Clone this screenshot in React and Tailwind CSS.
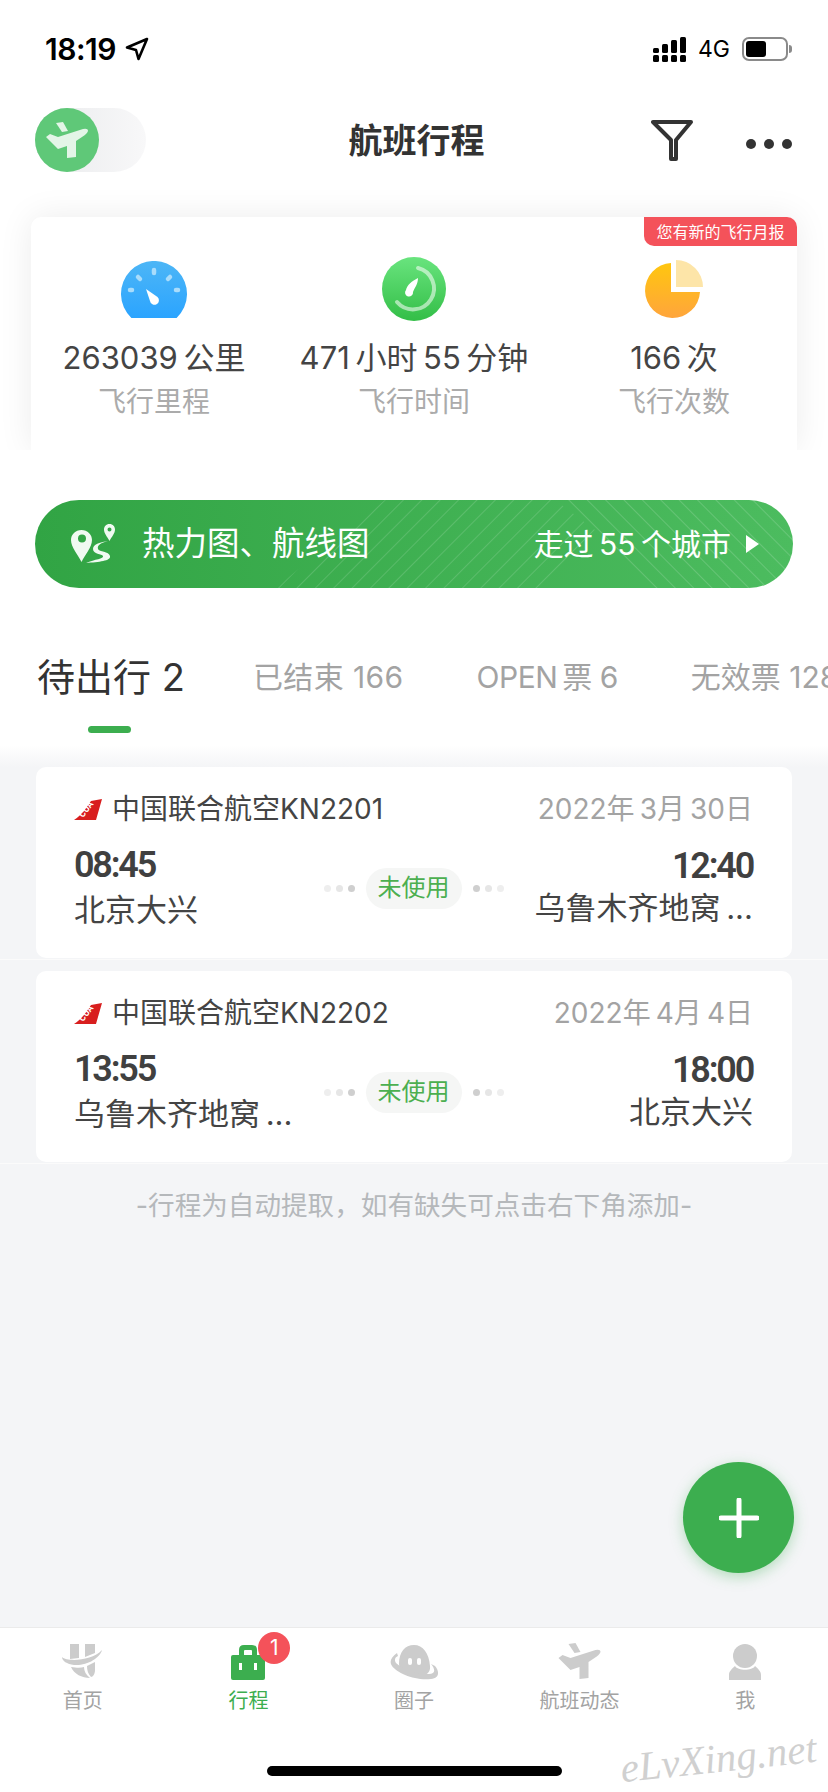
import React from 'react';

// small drawn icons
function Plane({ className, fill = '#cccccc' }) {
  return (
    <svg viewBox="0 0 43 37" className={className}>
      <path d="M10 1 L17 0 L22 9 L16 10 Z" fill={fill} />
      <path d="M0 15 L4 12 L12 15 L37 7 Q42 6 42 9 Q41 12 36 15 L30 19 L30 35 L21 36 L21 24 L12 27 Z" fill={fill} />
    </svg>
  );
}

function HomeIcon() {
  return (
    <svg viewBox="0 0 41 36" className="w-[41px] h-[36px]">
      <path d="M8 0 H17 V14 L8 15 Z M23 0 H33 V9 L23 13 Z" fill="#cccccc" />
      <path d="M0 13 C5 18 30 17 40 6 C38 14 25 22 12 21 C5 20 0 17 0 13 Z" fill="#cccccc" />
      <path d="M9 23 C15 24 19 24 22 23 C22 27 24 31 28 34 C20 34 12 30 9 23 Z M25 22 L33 18 V26 C33 30 31 33 29 33 C26 30 25 26 25 22 Z" fill="#cccccc" />
    </svg>
  );
}

function CaseIcon() {
  return (
    <svg viewBox="0 0 34 37" className="w-[34px] h-[37px]">
      <path d="M8 12 V7 Q8 2 13 2 H21 Q26 2 26 7 V12 H21 V8 Q21 7 20 7 H14 Q13 7 13 8 V12 Z" fill="#3cae4f" />
      <rect x="0" y="12" width="34" height="25" rx="2" fill="#3cae4f" />
      <rect x="8" y="20" width="3" height="7" fill="#ffffff" />
      <rect x="23" y="20" width="3" height="7" fill="#ffffff" />
    </svg>
  );
}

function CircleIcon() {
  return (
    <svg viewBox="0 0 50 36" className="w-[50px] h-[36px]">
      <path d="M10 20 C10 8 16 1 25 1 C34 1 40 9 41 22 C42 29 36 33 27 32 C17 31 10 27 10 20 Z" fill="#cccccc" />
      <path d="M8 9 C2 13 0 18 3 22 C8 29 26 37 42 35 C50 34 51 28 46 22 L42 20 C47 26 46 30 40 30 C28 31 13 25 7 19 C5 16 6 13 9 12 Z" fill="#cccccc" />
      <rect x="19" y="14" width="4" height="7" rx="2" fill="#ffffff" />
      <rect x="28" y="14" width="4" height="7" rx="2" fill="#ffffff" />
    </svg>
  );
}

function PersonIcon() {
  return (
    <svg viewBox="0 0 32 36" className="w-[32px] h-[36px]">
      <ellipse cx="16" cy="12" rx="12" ry="12" fill="#cccccc" />
      <path d="M0 36 V31 C0 27 3 25 6 22 C9 27 23 27 26 22 C29 25 32 27 32 31 V36 Z" fill="#cccccc" />
    </svg>
  );
}

function GaugeIcon() {
  return (
    <svg viewBox="0 0 66 57" className="w-[66px] h-[57px]">
      <defs>
        <linearGradient id="gauge" x1="0" y1="0" x2="0" y2="1">
          <stop offset="0" stopColor="#4db6f6" />
          <stop offset="1" stopColor="#2ba4ff" />
        </linearGradient>
      </defs>
      <path d="M10.4 57 A33 33 0 1 1 55.6 57 Z" fill="url(#gauge)" />
      <g stroke="#a9dcfb" strokeWidth="4.5" strokeLinecap="round">
        <path d="M33 9 V12" />
        <path d="M17 16 L19 18" />
        <path d="M49 16 L47 18" />
        <path d="M9 29 H11" />
        <path d="M55 29 H57" />
      </g>
      <path d="M25 28 L36.5 36 A4.5 4.5 0 1 1 29 40 Z" fill="#ffffff" />
    </svg>
  );
}

function ClockIcon() {
  return (
    <svg viewBox="0 0 64 64" className="w-[64px] h-[64px]">
      <defs>
        <linearGradient id="clock" x1="0" y1="0" x2="0" y2="1">
          <stop offset="0" stopColor="#69e47e" />
          <stop offset="1" stopColor="#33be47" />
        </linearGradient>
      </defs>
      <circle cx="32" cy="32" r="32" fill="url(#clock)" />
      <path d="M36 11 A21 21 0 1 1 15 45" fill="none" stroke="#ffffff" strokeOpacity="0.55" strokeWidth="4" strokeLinecap="round" />
      <path d="M36 21 C36 27 33 30 31 35 A4 4 0 1 1 24 33 C25 28 30 24 36 21 Z" fill="#ffffff" />
    </svg>
  );
}

function PieIcon() {
  return (
    <svg viewBox="0 0 60 60" className="w-[60px] h-[60px]">
      <defs>
        <linearGradient id="pie" x1="0" y1="0" x2="0" y2="1">
          <stop offset="0" stopColor="#ffc60f" />
          <stop offset="1" stopColor="#ffa53c" />
        </linearGradient>
      </defs>
      <path d="M27 4 A27.5 27.5 0 1 0 56 33 H27 Z" fill="url(#pie)" />
      <path d="M32 1 A27 27 0 0 1 59 28 H32 Z" fill="#fde5a8" />
    </svg>
  );
}

function AirlineLogo() {
  return (
    <svg viewBox="0 0 28 21" className="w-[28px] h-[21px] shrink-0">
      <path d="M0 21 C8 16 13 8 17 2 L28 0 L22 21 Z" fill="#d81e1e" />
      <text x="9" y="19" fontSize="8" fontWeight="700" fill="#ffffff" fontFamily="Inter" transform="rotate(-52 9 19)">CUA</text>
    </svg>
  );
}

function RouteIcon() {
  return (
    <svg viewBox="0 0 45 40" className="w-[45px] h-[40px]">
      <path fillRule="evenodd" d="M10.5 6 C4.5 6 0 10.5 0 16 C0 23 7 31 10.5 38 C14 31 21 23 21 16 C21 10.5 16.5 6 10.5 6 Z M11 10.5 A4 4 0 1 1 11 18.5 A4 4 0 1 1 11 10.5 Z" fill="#f0faf1" />
      <path fillRule="evenodd" d="M38.5 0 C35 0 33 2.5 33 5.5 C33 9.5 36.5 13 38.5 17 C40.5 13 44 9.5 44 5.5 C44 2.5 42 0 38.5 0 Z M38.5 3.5 A2 2 0 1 1 38.5 7.5 A2 2 0 1 1 38.5 3.5 Z" fill="#f0faf1" />
      <path d="M37 17 C30 19 26 21 27 25 C28 28 38 27 39 32 C40 37 28 38 15 39 C24 35 33 35 32 32 C31 30 22 30 22 25 C22 20 30 18 37 17 Z" fill="#f0faf1" />
    </svg>
  );
}

function BannerStripes() {
  return (
    <svg viewBox="0 0 758 88" className="absolute inset-0 w-full h-full">
      <defs>
        <pattern id="up" width="13" height="13" patternUnits="userSpaceOnUse" patternTransform="rotate(45)">
          <rect width="1" height="13" fill="#ffffff" fillOpacity="0.14" />
        </pattern>
        <pattern id="down" width="13" height="13" patternUnits="userSpaceOnUse" patternTransform="rotate(-45)">
          <rect width="1" height="13" fill="#ffffff" fillOpacity="0.16" />
        </pattern>
      </defs>
      <path d="M240 88 L350 0 H520 L560 30 L505 88 Z" fill="url(#up)" />
      <path d="M520 0 H758 V88 H610 Z" fill="url(#down)" />
    </svg>
  );
}

const Dots = ({ reverse }) => {
  const colors = reverse ? ['#cfcfcf', '#e6e6e6', '#eeeeee'] : ['#eeeeee', '#e6e6e6', '#cfcfcf'];
  return (
    <div className="flex gap-[5px]">
      {colors.map((c, i) => (
        <span key={i} className="w-[7px] h-[7px] rounded-full" style={{ backgroundColor: c }}></span>
      ))}
    </div>
  );
};

const flights = [
  { name: '中国联合航空KN2201', date: '2022年\u20093月\u200930日', dep: '08:45', arr: '12:40', from: '北京大兴', to: '乌鲁木齐地窝\u2009...' },
  { name: '中国联合航空KN2202', date: '2022年\u20094月\u20094日', dep: '13:55', arr: '18:00', from: '乌鲁木齐地窝\u2009...', to: '北京大兴' },
];

const navItems = [
  { label: '首页', icon: <HomeIcon /> },
  { label: '行程', icon: <CaseIcon />, active: true },
  { label: '圈子', icon: <CircleIcon /> },
  { label: '航班动态', icon: <Plane className="w-[44px] h-[37px]" /> },
  { label: '我', icon: <PersonIcon /> },
];

function FlightCard({ flight }) {
  return (
    <div>
      <div className="mx-[36px] h-[191px] bg-white rounded-[10px] pl-[38px] pr-[39px] pt-[24px]">
        <div className="h-[36px] flex items-center justify-between">
          <div className="flex items-center gap-[10px] text-[28px] text-[#444444]">
            <AirlineLogo />
            {flight.name}
          </div>
          <div className="text-[28px] text-[#a3a3a3]">{flight.date}</div>
        </div>
        <div className="mt-[17px] grid grid-cols-[1fr_180px_1fr] items-center">
          <div>
            <div className="h-[42px] leading-[42px] text-[36px] font-semibold tracking-[-2.2px] text-[#404040] [font-family:Roboto,sans-serif]">{flight.dep}</div>
            <div className="mt-[2px] h-[44px] leading-[44px] text-[31px] text-[#444444] whitespace-nowrap">{flight.from}</div>
          </div>
          <div className="flex items-center justify-between">
            <Dots />
            <div className="w-[96px] h-[41px] rounded-full bg-[#f5f6f5] flex items-center justify-center text-[24px] text-[#4caf50]">未使用</div>
            <Dots reverse />
          </div>
          <div className="text-right">
            <div className="h-[40px] leading-[40px] text-[36px] font-semibold tracking-[-2.2px] text-[#404040] [font-family:Roboto,sans-serif]">{flight.arr}</div>
            <div className="h-[44px] leading-[44px] text-[31px] text-[#444444] whitespace-nowrap">{flight.to}</div>
          </div>
        </div>
      </div>
      <div className="mt-[1px] mb-[11px] h-[1px] bg-[#fbfbfb]"></div>
    </div>
  );
}

export default function App() {
  return (
    <div className="relative w-[828px] h-[1792px] overflow-hidden flex flex-col bg-white text-[#333333] [font-family:Inter,'Noto_Sans_CJK_SC',sans-serif]">
      {/* status bar + header sit above the stats card shadow */}
      <div className="relative z-10 bg-white">
        <div className="h-[88px] pl-[45px] pr-[36px] pt-[10px] flex items-center justify-between text-black">
          <div className="flex items-center gap-[9px]">
            <span className="text-[30px] leading-none font-semibold tracking-[-0.5px]">18:19</span>
            <svg viewBox="0 0 24 24" className="w-[24px] h-[24px]">
              <path d="M22 2 L2 10.5 L11 13 L13.5 22 Z" fill="none" stroke="#000000" strokeWidth="2.6" strokeLinejoin="round" />
            </svg>
          </div>
          <div className="flex items-center">
            <svg viewBox="0 0 33 25" className="w-[33px] h-[25px]">
              <g fill="#000000">
                <rect x="0" y="11" width="6" height="5" rx="1.5" /><rect x="0" y="18" width="6" height="7" rx="1.5" />
                <rect x="9" y="7" width="6" height="9" rx="1.5" /><rect x="9" y="18" width="6" height="7" rx="1.5" />
                <rect x="18" y="3" width="6" height="13" rx="1.5" /><rect x="18" y="18" width="6" height="7" rx="1.5" />
                <rect x="27" y="0" width="6" height="16" rx="1.5" /><rect x="27" y="18" width="6" height="7" rx="1.5" />
              </g>
            </svg>
            <span className="ml-[12px] text-[23px] leading-none">4G</span>
            <div className="ml-[12px] w-[46px] h-[24px] rounded-[7px] border-2 border-[#8a8a8a] p-[2px]">
              <div className="w-[20px] h-full rounded-[3px] bg-black"></div>
            </div>
            <div className="ml-[1px] w-[3px] h-[8px] rounded-r-full bg-[#8a8a8a]"></div>
          </div>
        </div>
        <div className="h-[102px] pl-[35px] pr-[36px] pt-[2px] flex items-center justify-between">
          <div className="w-[111px] h-[64px] rounded-full bg-gradient-to-r from-[#e9eaec] to-[#f8f8f9]">
            <div className="w-[64px] h-[64px] rounded-full bg-[#5fc878] flex items-center justify-center">
              <Plane className="w-[43px] h-[37px]" fill="#e3f5e7" />
            </div>
          </div>
          <div className="text-[34px] font-bold text-[#333333] ml-[36px]">航班行程</div>
          <div className="flex items-center gap-[53px]">
            <svg viewBox="0 0 42 42" className="w-[42px] h-[42px]">
              <path d="M2 3 H40 L25 21 V40 H20 V21 Z" fill="none" stroke="#333333" strokeWidth="4" strokeLinejoin="round" />
            </svg>
            <div className="flex gap-[8px] mt-[8px]">
              <span className="w-[10px] h-[10px] rounded-full bg-[#333333]"></span>
              <span className="w-[10px] h-[10px] rounded-full bg-[#333333]"></span>
              <span className="w-[10px] h-[10px] rounded-full bg-[#333333]"></span>
            </div>
          </div>
        </div>
      </div>

      {/* stats card */}
      <div className="h-[260px] pt-[27px] px-[31px]">
        <div className="relative h-[233px] bg-white rounded-t-[10px] shadow-[0_0_34px_rgba(0,0,0,0.08)]">
          <div className="absolute top-0 right-0 w-[153px] h-[29px] bg-[#f4525a] rounded-tr-[10px] rounded-bl-[10px] flex items-center justify-center text-[16px] text-white">您有新的飞行月报</div>
          <div className="pt-[40px] grid grid-cols-[260px_260px_260px] justify-center">
            {[
              { icon: <GaugeIcon />, value: '263039\u2009公里', label: '飞行里程' },
              { icon: <ClockIcon />, value: '471\u2009小时\u200955\u2009分钟', label: '飞行时间' },
              { icon: <PieIcon />, value: '166\u2009次', label: '飞行次数' },
            ].map((s) => (
              <div key={s.label} className="flex flex-col items-center">
                <div className="h-[64px] flex items-center justify-center">{s.icon}</div>
                <div className="mt-[15px] h-[44px] leading-[44px] text-[31px] text-[#444444] whitespace-nowrap">{s.value}</div>
                <div className="mt-[1px] h-[42px] leading-[42px] text-[28px] text-[#ababab]">{s.label}</div>
              </div>
            ))}
          </div>
        </div>
      </div>

      {/* banner + tabs */}
      <div className="relative bg-white pt-[50px] h-[295px]">
        <div className="relative mx-[35px] h-[88px] rounded-full overflow-hidden bg-gradient-to-r from-[#31a444] to-[#4cbc5f] text-white">
          <BannerStripes />
          <div className="relative h-full pl-[36px] pr-[34px] flex items-center justify-between">
            <div className="flex items-center gap-[26px]">
              <RouteIcon />
              <span className="text-[32.5px] leading-none">热力图、航线图</span>
            </div>
            <div className="flex items-center gap-[15px]">
              <span className="text-[30px] leading-none">走过&thinsp;55&thinsp;个城市</span>
              <span className="w-0 h-0 border-y-[9px] border-y-transparent border-l-[13px] border-l-white"></span>
            </div>
          </div>
        </div>
        <div className="pt-[66px] pl-[37px] flex items-center whitespace-nowrap h-[112px] gap-[73px] text-[30px] text-[#a3a3a3]">
          <span className="text-[38px] leading-[46px] text-[#333333] -mr-[5px] shrink-0">待出行 2</span>
          <span className="shrink-0 tracking-[0.4px]">已结束 166</span>
          <span className="shrink-0 tracking-[-0.5px]">OPEN&thinsp;票 6</span>
          <span className="shrink-0">无效票 128</span>
        </div>
        <div className="mt-[26px] ml-[88px] w-[43px] h-[7px] rounded-full bg-[#3cae4f]"></div>
      </div>

      {/* flight list */}
      <div className="flex-1 bg-[#f4f5f7]">
        <div className="h-[22px] bg-gradient-to-b from-white to-[#f4f5f7]"></div>
        {flights.map((f) => (
          <FlightCard key={f.name} flight={f} />
        ))}
        <div className="mt-[23px] h-[36px] leading-[36px] text-center text-[26.6px] text-[#b5b8bb]">-行程为自动提取，如有缺失可点击右下角添加-</div>
      </div>

      {/* add button */}
      <div className="absolute left-[683px] top-[1462px] w-[111px] h-[111px] rounded-full bg-[#3cae4f] shadow-[0_4px_14px_rgba(60,174,79,0.35)] flex items-center justify-center">
        <svg viewBox="0 0 40 40" className="w-[40px] h-[40px]">
          <path d="M20 2 V38 M2 20 H38" stroke="#ffffff" strokeWidth="5" strokeLinecap="round" />
        </svg>
      </div>

      {/* tab bar */}
      <div className="h-[165px] bg-white border-t border-[#ebebeb]">
        <div className="grid grid-cols-5 pt-[15px]">
          {navItems.map((item) => (
            <div key={item.label} className="flex flex-col items-center">
              <div className="relative h-[37px] flex items-center justify-center">
                {item.icon}
                {item.active && (
                  <div className="absolute left-[27px] -top-[11px] w-[32px] h-[32px] rounded-full bg-[#f4525a] text-white text-[21px] flex items-center justify-center">1</div>
                )}
              </div>
              <div className={`mt-[7px] h-[28px] leading-[28px] text-[20px] ${item.active ? 'text-[#3cae4f]' : 'text-[#a3a3a3]'}`}>{item.label}</div>
            </div>
          ))}
        </div>
        <div className="mt-[51px] mx-auto w-[295px] h-[10px] rounded-full bg-black"></div>
      </div>

      {/* watermark */}
      <div className="absolute left-[620px] top-[1738px] text-[41px] leading-none italic text-[#d0d0d0] -rotate-6 [font-family:'Liberation_Serif',serif]">eLvXing.net</div>
    </div>
  );
}
